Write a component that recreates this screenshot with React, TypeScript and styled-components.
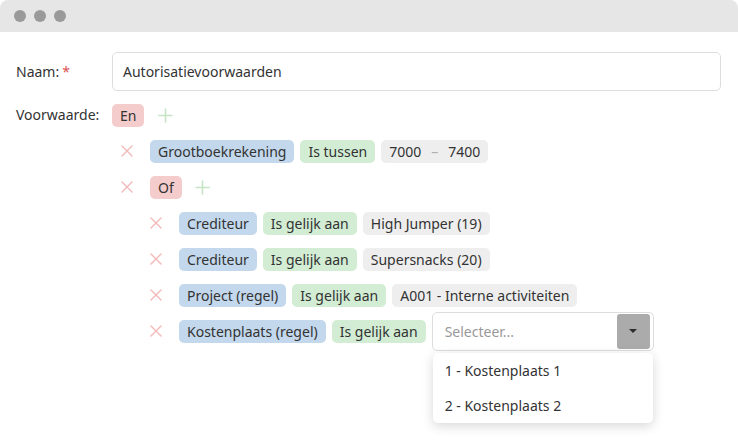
import React from "react";
import styled, { createGlobalStyle } from "styled-components";

const GlobalStyle = createGlobalStyle`
  html, body {
    margin: 0;
    padding: 0;
    background: #ffffff;
  }
  body {
    font-family: "Noto Sans", "Open Sans", Arial, sans-serif;
    font-size: 14px;
    color: #333333;
  }
`;

const Window = styled.div`
  width: 738px;
  height: 443px;
  background: #ffffff;
  border-radius: 8px 8px 0 0;
  overflow: hidden;
  display: flex;
  flex-direction: column;
`;

const TitleBar = styled.div`
  height: 32px;
  flex-shrink: 0;
  background: #e6e6e6;
  display: flex;
  align-items: center;
  gap: 8px;
  padding-left: 14px;
`;

const Dot = styled.span`
  width: 12px;
  height: 12px;
  border-radius: 50%;
  background: #9a9a9a;
`;

const Content = styled.div`
  padding: 20px 17px 0 16px;
  display: flex;
  flex-direction: column;
  gap: 6px;
`;

const FormRow = styled.div<{ $align?: string }>`
  display: grid;
  grid-template-columns: 96px 1fr;
  align-items: ${(p) => p.$align || "center"};
`;

const Label = styled.label`
  line-height: 36px;
  color: #333333;
`;

const Required = styled.span`
  color: #d9534f;
  margin-left: 3px;
`;

const TextInput = styled.div`
  height: 39px;
  box-sizing: border-box;
  border: 1px solid #dddddd;
  border-radius: 5px;
  padding: 0 10px;
  display: flex;
  align-items: center;
`;

const Group = styled.div`
  display: flex;
  flex-direction: column;
`;

const Line = styled.div`
  height: 36px;
  display: flex;
  align-items: center;
  gap: 6px;
  position: relative;
`;

const Children = styled.div<{ $indent: number }>`
  display: flex;
  flex-direction: column;
  padding-left: ${(p) => p.$indent}px;
`;

type TagKind = "operator" | "field" | "compare" | "value";

const tagColors: Record<TagKind, string> = {
  operator: "#f5cccc",
  field: "#c3d8ec",
  compare: "#d2edd3",
  value: "#eeeeee",
};

const Tag = styled.span<{ $kind: TagKind }>`
  height: 23px;
  display: inline-flex;
  align-items: center;
  padding: 0 8px;
  border-radius: 5px;
  background: ${(p) => tagColors[p.$kind]};
  color: #333333;
  white-space: nowrap;
`;

const Dash = styled.span`
  color: #b0b0b0;
  margin: 0 10px;
`;

const IconButton = styled.button<{ $before?: number; $after?: number }>`
  width: 24px;
  height: 24px;
  padding: 0;
  margin: 0 ${(p) => p.$after || 0}px 0 ${(p) => p.$before || 0}px;
  border: none;
  background: transparent;
  display: inline-flex;
  align-items: center;
  justify-content: center;
  cursor: pointer;
`;

const Select = styled.div`
  position: relative;
  width: 222px;
  height: 39px;
  box-sizing: border-box;
  border: 1px solid #dddddd;
  border-radius: 5px;
  display: flex;
  align-items: center;
  padding-left: 12px;
`;

const Placeholder = styled.span`
  flex: 1;
  color: #999999;
`;

const Toggle = styled.span`
  width: 33px;
  height: 35px;
  margin-right: 3px;
  border-radius: 3px;
  background: #ababab;
  display: flex;
  align-items: center;
  justify-content: center;
`;

const Caret = styled.span`
  width: 0;
  height: 0;
  border-left: 4px solid transparent;
  border-right: 4px solid transparent;
  border-top: 4px solid #2b2b2b;
`;

const Menu = styled.ul`
  position: absolute;
  top: 40px;
  left: 0;
  width: 220px;
  margin: 0;
  padding: 0;
  list-style: none;
  background: #ffffff;
  border-radius: 5px;
  box-shadow: 0 3px 12px rgba(0, 0, 0, 0.16);
  z-index: 2;
`;

const MenuItem = styled.li`
  height: 35px;
  display: flex;
  align-items: center;
  padding: 0 12px;
  color: #333333;
`;

const RemoveIcon = () => (
  <svg width="12" height="12" viewBox="0 0 12 12">
    <path d="M1 1L11 11M11 1L1 11" stroke="#f2b8b8" strokeWidth="1.4" strokeLinecap="round" />
  </svg>
);

const AddIcon = () => (
  <svg width="15" height="15" viewBox="0 0 15 15">
    <path d="M7.5 1V14M1 7.5H14" stroke="#c4e4c5" strokeWidth="1.6" strokeLinecap="round" />
  </svg>
);

type Rule = { field: string; compare: string; value: React.ReactNode };

const Remove = () => (
  <IconButton $after={5}>
    <RemoveIcon />
  </IconButton>
);

const Add = () => (
  <IconButton $before={3}>
    <AddIcon />
  </IconButton>
);

const RuleLine: React.FC<{ rule: Rule }> = ({ rule }) => (
  <Line>
    <Remove />
    <Tag $kind="field">{rule.field}</Tag>
    <Tag $kind="compare">{rule.compare}</Tag>
    {rule.value}
  </Line>
);

const orRules: Rule[] = [
  { field: "Crediteur", compare: "Is gelijk aan", value: <Tag $kind="value">High Jumper (19)</Tag> },
  { field: "Crediteur", compare: "Is gelijk aan", value: <Tag $kind="value">Supersnacks (20)</Tag> },
  {
    field: "Project (regel)",
    compare: "Is gelijk aan",
    value: <Tag $kind="value">A001 - Interne activiteiten</Tag>,
  },
];

const options = ["1 - Kostenplaats 1", "2 - Kostenplaats 2"];

export default function App() {
  return (
    <>
      <GlobalStyle />
      <Window>
        <TitleBar>
          <Dot />
          <Dot />
          <Dot />
        </TitleBar>
        <Content>
          <FormRow>
            <Label>
              Naam:<Required>*</Required>
            </Label>
            <TextInput>Autorisatievoorwaarden</TextInput>
          </FormRow>
          <FormRow $align="start">
            <Label>Voorwaarde:</Label>
            <Group>
              <Line>
                <Tag $kind="operator">En</Tag>
                <Add />
              </Line>
              <Children $indent={3}>
                <RuleLine
                  rule={{
                    field: "Grootboekrekening",
                    compare: "Is tussen",
                    value: (
                      <Tag $kind="value">
                        7000<Dash>–</Dash>7400
                      </Tag>
                    ),
                  }}
                />
                <Group>
                  <Line>
                    <Remove />
                    <Tag $kind="operator">Of</Tag>
                    <Add />
                  </Line>
                  <Children $indent={29}>
                    {orRules.map((rule, i) => (
                      <RuleLine key={i} rule={rule} />
                    ))}
                    <RuleLine
                      rule={{
                        field: "Kostenplaats (regel)",
                        compare: "Is gelijk aan",
                        value: (
                          <Select>
                            <Placeholder>Selecteer...</Placeholder>
                            <Toggle>
                              <Caret />
                            </Toggle>
                            <Menu>
                              {options.map((o) => (
                                <MenuItem key={o}>{o}</MenuItem>
                              ))}
                            </Menu>
                          </Select>
                        ),
                      }}
                    />
                  </Children>
                </Group>
              </Children>
            </Group>
          </FormRow>
        </Content>
      </Window>
    </>
  );
}
